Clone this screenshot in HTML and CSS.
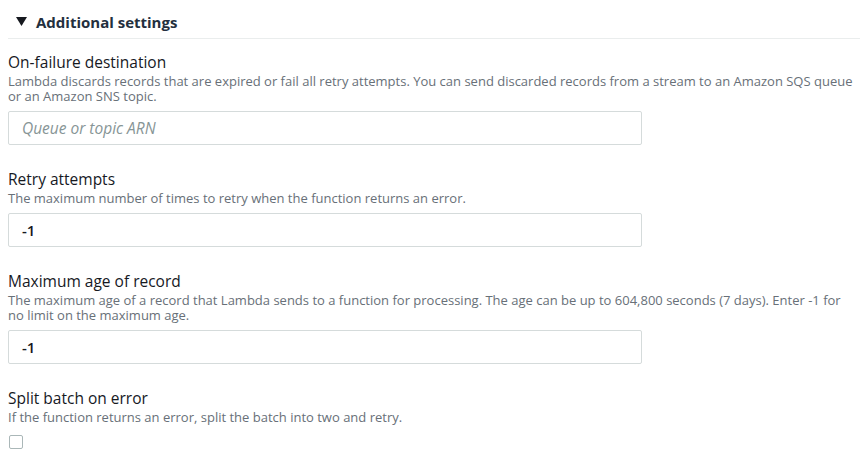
FILE: index.html
```html
<!DOCTYPE html>
<html lang="en">
<head>
<meta charset="utf-8">
<title>Additional settings</title>
<link rel="stylesheet" href="styles.css">
</head>
<body>
<div class="panel">
  <div class="header">
    <svg class="caret" width="11" height="9" viewBox="0 0 11 9"><polygon points="0,0 11,0 5.5,9" fill="#16191f"/></svg>
    <span class="header-title">Additional settings</span>
  </div>
  <div class="field first">
    <div class="label">On-failure destination</div>
    <div class="desc">Lambda discards records that are expired or fail all retry attempts. You can send discarded records from a stream to an Amazon SQS queue or an Amazon SNS topic.</div>
    <div class="input placeholder">Queue or topic ARN</div>
  </div>
  <div class="field">
    <div class="label">Retry attempts</div>
    <div class="desc">The maximum number of times to retry when the function returns an error.</div>
    <div class="input">-1</div>
  </div>
  <div class="field">
    <div class="label">Maximum age of record</div>
    <div class="desc">The maximum age of a record that Lambda sends to a function for processing. The age can be up to 604,800 seconds (7 days). Enter -1 for no limit on the maximum age.</div>
    <div class="input">-1</div>
  </div>
  <div class="field">
    <div class="label">Split batch on error</div>
    <div class="desc">If the function returns an error, split the batch into two and retry.</div>
    <div class="checkbox"></div>
  </div>
</div>
</body>
</html>
```

FILE: styles.css
```css
html, body {
  margin: 0;
  padding: 0;
  background: #ffffff;
}
body {
  font-family: "Open Sans", "Noto Sans", sans-serif;
  color: #16191f;
}
.panel {
  width: 852px;
  padding-left: 8px;
}
.header {
  display: flex;
  align-items: center;
  height: 38px;
  border-bottom: 1px solid #eaeded;
  box-sizing: content-box;
}
.caret {
  margin-left: 8px;
  margin-right: 9px;
  margin-top: 5px;
  flex: none;
}
.header-title {
  font-size: 15px;
  font-weight: 700;
  line-height: 20px;
  margin-top: 5px;
  color: #232f3e;
}
.field {
  margin-top: 24px;
  display: flex;
  flex-direction: column;
  align-items: flex-start;
}
.field.first {
  margin-top: 13px;
}
.label {
  font-size: 15.5px;
  line-height: 20px;
  color: #16191f;
}
.desc {
  margin-top: 2px;
  font-size: 13px;
  line-height: 15px;
  color: #687078;
  width: 846px;
}
.input {
  margin-top: 7px;
  width: 634px;
  height: 34px;
  box-sizing: border-box;
  border: 1px solid #d5dbdb;
  border-radius: 2px;
  padding: 0 13px;
  display: flex;
  align-items: center;
  font-size: 15px;
  color: #16191f;
  font-weight: 600;
}
.input.placeholder {
  font-style: italic;
  font-weight: 400;
  font-size: 15.5px;
  color: #879596;
}
.checkbox {
  margin-top: 10px;
  margin-left: 1px;
  width: 14px;
  height: 14px;
  box-sizing: border-box;
  border: 1px solid #aab7b8;
  border-radius: 2px;
}
```
